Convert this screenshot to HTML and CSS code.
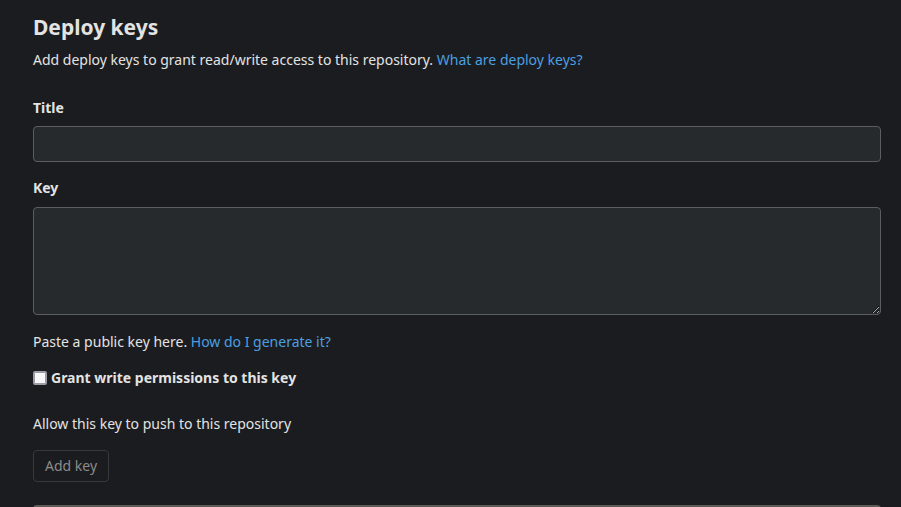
FILE: index.html
```html
<!DOCTYPE html>
<html lang="en">
<head>
    <meta charset="UTF-8">
    <title>Deploy keys</title>
    <link rel="stylesheet" href="styles.css">
</head>
<body>
    <div class="container">
        <h2 class="title">Deploy keys</h2>
        <p class="lead">Add deploy keys to grant read/write access to this repository. <a href="#">What are deploy keys?</a></p>

        <form class="key-form">
            <div class="field">
                <label for="keyTitle">Title</label>
                <input id="keyTitle" type="text" class="input">
            </div>

            <div class="field">
                <label for="keyBody">Key</label>
                <textarea id="keyBody" class="input textarea"></textarea>
            </div>

            <p class="help">Paste a public key here. <a href="#">How do I generate it?</a></p>

            <label class="check">
                <input type="checkbox">
                <span>Grant write permissions to this key</span>
            </label>
            <p class="check-note">Allow this key to push to this repository</p>

            <button type="button" class="btn" disabled>Add key</button>
        </form>

        <div class="next-box"></div>
    </div>
</body>
</html>
```

FILE: styles.css
```css
body {
    font-family: "Noto Sans", "Open Sans", sans-serif;
    margin: 0;
    padding: 0;
    background-color: #1b1c1f;
    color: #e3e3e3;
    font-size: 14px;
    line-height: 20px;
}

a {
    color: #4b9fe1;
    text-decoration: none;
}

.container {
    padding: 12px 20px 0 33px;
}

.title {
    font-size: 21px;
    line-height: 30px;
    font-weight: 700;
    margin: 0;
}

.lead {
    margin: 8px 0 0;
}

.key-form {
    margin-top: 28px;
}

.field {
    display: flex;
    flex-direction: column;
    margin-bottom: 16px;
}

.field label {
    font-weight: 700;
    margin-bottom: 8px;
}

.input {
    box-sizing: border-box;
    height: 36px;
    background-color: #262a2c;
    border: 1px solid #5b5e61;
    border-radius: 4px;
    color: #e3e3e3;
    font: inherit;
    padding: 6px 10px;
}

.textarea {
    margin-top: 1px;
    height: 108px;
    resize: vertical;
}

.help {
    margin: 0;
    padding-top: 1px;
}

.check {
    display: flex;
    align-items: center;
    gap: 4px;
    margin-top: 16px;
    font-weight: 700;
}

.check input {
    appearance: none;
    box-sizing: border-box;
    margin: 0;
    width: 14px;
    height: 14px;
    background-color: #f7f7f8;
    border: 2px solid #9d9ca6;
    border-radius: 2px;
}

.check-note {
    margin: 26px 0 0;
}

.btn {
    margin-top: 16px;
    height: 32px;
    padding: 0 11px;
    background-color: #1b1c1f;
    border: 1px solid #37393c;
    border-radius: 4px;
    color: #8b8b8b;
    font: inherit;
}

.next-box {
    margin-top: 23px;
    height: 20px;
    border-top: 2px solid #5e5b56;
    border-radius: 4px 4px 0 0;
}
```
